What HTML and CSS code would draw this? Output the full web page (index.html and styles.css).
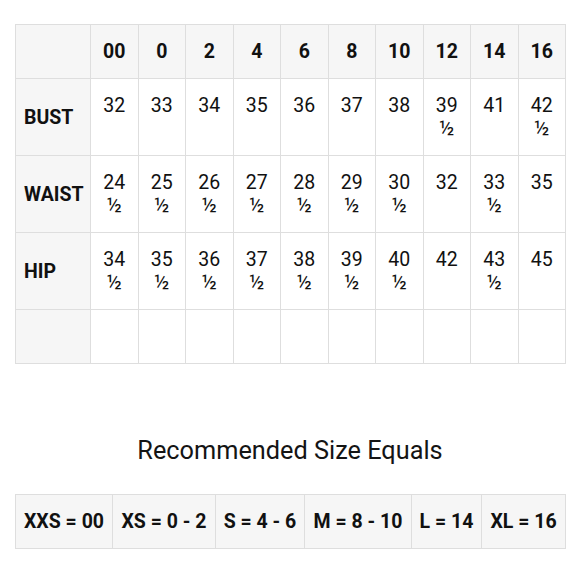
FILE: index.html
```html
<!DOCTYPE html>
<html>
<head>
<meta charset="utf-8">
<link rel="stylesheet" href="styles.css">
</head>
<body>
<div class="page">
  <table class="chart">
    <colgroup>
      <col class="label-col">
      <col span="10" class="size-col">
    </colgroup>
    <tr class="head">
      <th class="label"></th>
      <th>00</th><th>0</th><th>2</th><th>4</th><th>6</th><th>8</th><th>10</th><th>12</th><th>14</th><th>16</th>
    </tr>
    <tr class="data">
      <th class="label">BUST</th>
      <td>32</td><td>33</td><td>34</td><td>35</td><td>36</td><td>37</td><td>38</td><td>39 ½</td><td>41</td><td>42 ½</td>
    </tr>
    <tr class="data">
      <th class="label">WAIST</th>
      <td>24 ½</td><td>25 ½</td><td>26 ½</td><td>27 ½</td><td>28 ½</td><td>29 ½</td><td>30 ½</td><td>32</td><td>33 ½</td><td>35</td>
    </tr>
    <tr class="data">
      <th class="label">HIP</th>
      <td>34 ½</td><td>35 ½</td><td>36 ½</td><td>37 ½</td><td>38 ½</td><td>39 ½</td><td>40 ½</td><td>42</td><td>43 ½</td><td>45</td>
    </tr>
    <tr class="data">
      <th class="label">&nbsp;</th>
      <td>&nbsp;</td><td></td><td></td><td></td><td></td><td></td><td></td><td></td><td></td><td></td>
    </tr>
  </table>

  <h2 class="title">Recommended Size Equals</h2>

  <table class="equals">
    <colgroup>
      <col class="e1"><col class="e2"><col class="e3"><col class="e4"><col class="e5"><col class="e6">
    </colgroup>
    <tr>
      <td>XXS = 00</td><td>XS = 0 - 2</td><td>S = 4 - 6</td><td>M = 8 - 10</td><td>L = 14</td><td>XL = 16</td>
    </tr>
  </table>
</div>
</body>
</html>
```

FILE: styles.css
```css
html, body {
  margin: 0;
  padding: 0;
  background: #ffffff;
}

body {
  font-family: Roboto, "Liberation Sans", sans-serif;
  color: #111111;
}

.page {
  padding: 24px 15px 0 15px;
  width: 550px;
}

table {
  border-collapse: collapse;
  table-layout: fixed;
  width: 550px;
}

th, td {
  border: 1px solid #dedede;
  padding: 15px 8px;
  font-size: 19.5px;
  line-height: 23px;
  text-align: center;
}

.label-col { width: 75px; }
.size-col { width: 47.5px; }

.chart th {
  font-weight: 700;
  background: #f6f6f6;
  vertical-align: middle;
}

.chart .label {
  text-align: left;
}

.chart td {
  font-weight: 400;
  vertical-align: top;
  background: #ffffff;
}

.title {
  margin: 67px 0 0 0;
  font-size: 25.3px;
  line-height: 40px;
  font-weight: 400;
  text-align: center;
  color: #141414;
}

.equals {
  margin-top: 23px;
}

.equals td {
  background: #f6f6f6;
  font-weight: 700;
  white-space: nowrap;
  padding: 15px 0;
}

.e1 { width: 97px; }
.e2 { width: 103px; }
.e3 { width: 89px; }
.e4 { width: 107px; }
.e5 { width: 70px; }
.e6 { width: 84px; }
```
